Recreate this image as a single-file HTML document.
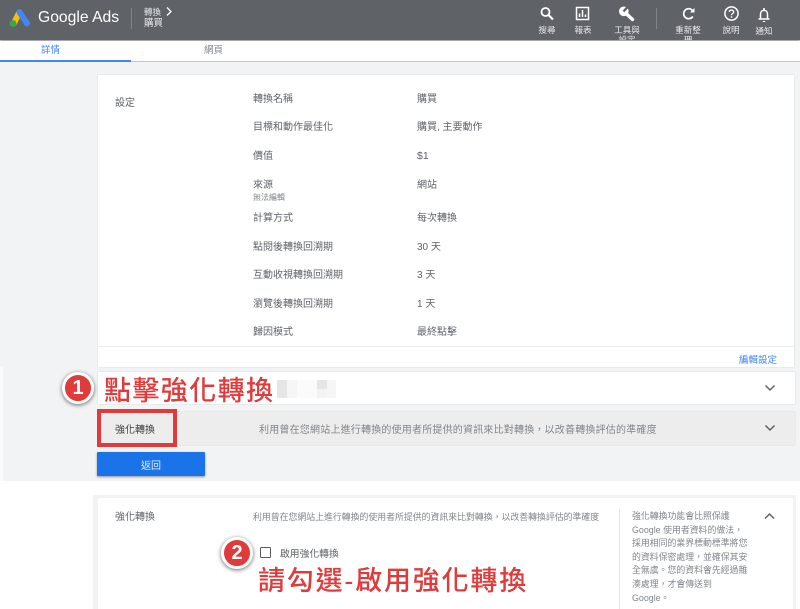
<!DOCTYPE html>
<html lang="zh-Hant">
<head>
<meta charset="utf-8">
<title>Google Ads</title>
<style>
html,body{margin:0;padding:0;background:#fff;overflow:hidden;width:800px;height:609px}
body{position:relative;font-family:"Liberation Sans","Noto Sans CJK TC",sans-serif;font-size:10px;color:#5f6368}
div,span,svg{position:absolute}
.t{white-space:nowrap;line-height:14px}
.w{color:#e8eaed;font-size:8.5px;line-height:11px;text-align:center;white-space:nowrap}
.big{color:#e03a3a;font-size:27px;font-weight:500;line-height:32px;white-space:nowrap;letter-spacing:1.4px}
.c{width:26px;height:26px;border-radius:50%;background:#e03a3a;border:3px solid #fff;box-shadow:0 1px 4px rgba(0,0,0,.6);color:#fff;font-weight:bold;font-size:20px;line-height:26px;text-align:center}
</style>
</head>
<body>
<div style="left:0;top:0;width:800px;height:481px;background:#f1f3f4"></div>

<!-- header -->
<div style="left:0;top:0;width:800px;height:40px;background:#5f6368;box-shadow:0 1px 2px rgba(0,0,0,.45)"></div>
<svg style="left:9px;top:8px" width="22" height="20" viewBox="0 0 22 20">
<path d="M5 15 L10 5" stroke="#fbbc04" stroke-width="6" stroke-linecap="round" fill="none"/>
<path d="M10.500 4 L18 15.500" stroke="#4285f4" stroke-width="6" stroke-linecap="round" fill="none"/>
<circle cx="4" cy="15.500" r="3.400" fill="#34a853"/>
</svg>
<div class="t" style="left:38px;top:8px;font-size:15.700px;line-height:20px;color:#fff">Google Ads</div>
<div style="left:131px;top:8px;width:1px;height:21px;background:#80868b"></div>
<div class="t" style="left:144px;top:7px;color:#e8eaed;font-size:8.500px;line-height:11px">轉換</div>
<svg style="left:165px;top:6px" width="8" height="11" viewBox="0 0 8 11"><path d="M2 1.500 L6 5.500 L2 9.500" stroke="#fff" stroke-width="1.300" fill="none"/></svg>
<div class="t" style="left:144px;top:18px;color:#e8eaed;font-size:9.500px;line-height:11px">購買</div>

<svg style="left:539px;top:6px" width="16" height="15" viewBox="0 0 16 15"><circle cx="6.500" cy="6" r="4" stroke="#fff" stroke-width="1.800" fill="none"/><path d="M9.500 9 L14 13.500" stroke="#fff" stroke-width="2.200"/></svg>
<svg style="left:575px;top:6px" width="15" height="15" viewBox="0 0 15 15"><rect x="1.500" y="1.500" width="12" height="12" stroke="#fff" stroke-width="1.500" fill="none"/><path d="M4.500 11V7.500M7.500 11V4M10.500 11V8.500" stroke="#fff" stroke-width="1.500"/></svg>
<svg style="left:618px;top:6px" width="17" height="16" viewBox="0 0 17 16"><circle cx="5.800" cy="5.300" r="4.800" fill="#fff"/><path d="M6 5.500 L14.500 13.500" stroke="#fff" stroke-width="3.400" stroke-linecap="round"/><path d="M5.500 5.500 L9.500 1" stroke="#5f6368" stroke-width="2.400"/></svg>
<div style="left:656px;top:8px;width:1px;height:21px;background:#80868b"></div>
<svg style="left:681px;top:6px" width="15" height="15" viewBox="0 0 15 15"><path d="M11.800 10.500 A5 5 0 1 1 11.500 4.500" stroke="#fff" stroke-width="1.700" fill="none"/><path d="M13.500 2 V6.500 H9 Z" fill="#fff"/></svg>
<svg style="left:724px;top:6px" width="15" height="15" viewBox="0 0 15 15"><circle cx="7.500" cy="7.500" r="6.600" stroke="#fff" stroke-width="1.500" fill="none"/><path d="M5.300 6 C5.300 3.400 9.700 3.400 9.700 6 C9.700 7.500 7.500 7.500 7.500 9.300" stroke="#fff" stroke-width="1.300" fill="none"/><rect x="6.800" y="10.300" width="1.400" height="1.400" fill="#fff"/></svg>
<svg style="left:757px;top:7px" width="14" height="16" viewBox="0 0 14 16"><path d="M3.500 11.500 V7 C3.500 2.200 10.500 2.200 10.500 7 V11.500" stroke="#fff" stroke-width="1.500" fill="none"/><path d="M1.500 12 H12.500" stroke="#fff" stroke-width="1.500"/><path d="M5.800 14 H8.200 V15 H5.800 Z M6.200 1 H7.800 V3 H6.200 Z" fill="#fff"/></svg>

<div class="w" style="left:537px;top:25px;width:20px">搜尋</div>
<div class="w" style="left:573px;top:25px;width:20px">報表</div>
<div class="w" style="left:612px;top:25px;width:30px">工具與</div>
<div class="w" style="left:612px;top:35px;width:30px;height:5px;overflow:hidden">設定</div>
<div class="w" style="left:673px;top:25px;width:30px">重新整</div>
<div class="w" style="left:678px;top:35px;width:20px;height:5px;overflow:hidden">理</div>
<div class="w" style="left:721px;top:25px;width:20px">說明</div>
<div class="w" style="left:754px;top:26px;width:20px">通知</div>

<!-- tabs -->
<div style="left:0;top:41px;width:800px;height:20px;background:#fff;border-bottom:1px solid #c4c6c8"></div>
<div style="left:0;top:60px;width:131px;height:2px;background:#4285f4"></div>
<div class="t" style="left:41px;top:44px;color:#4285f4;font-size:9.500px">詳情</div>
<div class="t" style="left:204px;top:44px;font-size:9.500px;color:#80868b">網頁</div>

<!-- settings card -->
<div style="left:98px;top:75px;width:696px;height:292px;background:#fff;box-shadow:0 0 1px rgba(0,0,0,.18)"></div>
<div style="left:98px;top:346px;width:696px;height:1px;background:#eceef0"></div>
<div class="t" style="left:115px;top:97px">設定</div>

<div class="t" style="left:253px;top:93px">轉換名稱</div>
<div class="t" style="left:417px;top:93px">購買</div>
<div class="t" style="left:253px;top:121px">目標和動作最佳化</div>
<div class="t" style="left:417px;top:121px">購買, 主要動作</div>
<div class="t" style="left:253px;top:150px">價值</div>
<div class="t" style="left:417px;top:149px;font-size:10.500px">$1</div>
<div class="t" style="left:253px;top:179px">來源</div>
<div class="t" style="left:253px;top:191px;font-size:8px;color:#80868b">無法編輯</div>
<div class="t" style="left:417px;top:179px">網站</div>
<div class="t" style="left:253px;top:212px">計算方式</div>
<div class="t" style="left:417px;top:212px">每次轉換</div>
<div class="t" style="left:253px;top:241px">點閱後轉換回溯期</div>
<div class="t" style="left:417px;top:241px">30 天</div>
<div class="t" style="left:253px;top:269px">互動收視轉換回溯期</div>
<div class="t" style="left:417px;top:269px">3 天</div>
<div class="t" style="left:253px;top:298px">瀏覽後轉換回溯期</div>
<div class="t" style="left:417px;top:298px">1 天</div>
<div class="t" style="left:253px;top:326px">歸因模式</div>
<div class="t" style="left:417px;top:326px">最終點擊</div>
<div class="t" style="left:739px;top:354px;color:#4285f4;font-size:9.500px">編輯設定</div>

<!-- row white -->
<div style="left:0;top:367px;width:3px;height:114px;background:#fff;opacity:.6"></div>
<div style="left:98px;top:372px;width:697px;height:32px;background:#fff;box-shadow:0 0 1px rgba(0,0,0,.2)"></div>
<div style="left:277px;top:380px;width:10px;height:18px;background:#e6e6e6"></div>
<div style="left:287px;top:380px;width:10px;height:18px;background:#f6f6f6"></div>
<div style="left:297px;top:380px;width:20px;height:18px;background:#fbfbfb"></div>
<div style="left:317px;top:380px;width:10px;height:9px;background:#e6e6e6"></div>
<div style="left:317px;top:389px;width:10px;height:9px;background:#f3f3f3"></div>
<div style="left:327px;top:380px;width:9px;height:18px;background:#f6f6f6"></div>
<svg style="left:764px;top:384px" width="12" height="8" viewBox="0 0 12 8"><path d="M1.500 1.500 L6 6 L10.500 1.500" stroke="#5f6368" stroke-width="1.500" fill="none"/></svg>

<!-- row grey -->
<div style="left:98px;top:412px;width:697px;height:33px;background:#ededed;box-shadow:0 0 1px rgba(0,0,0,.2)"></div>
<div class="t" style="left:115px;top:424px;color:#3c4043">強化轉換</div>
<div class="t" style="left:259px;top:424px;color:#80868b;letter-spacing:.2px">利用曾在您網站上進行轉換的使用者所提供的資訊來比對轉換，以改善轉換評估的準確度</div>
<svg style="left:764px;top:424px" width="12" height="8" viewBox="0 0 12 8"><path d="M1.500 1.500 L6 6 L10.500 1.500" stroke="#5f6368" stroke-width="1.500" fill="none"/></svg>
<div style="left:97px;top:409px;width:72px;height:30px;border:4px solid #e03a3a"></div>

<div style="left:97px;top:452px;width:108px;height:24px;background:#1a73e8;border-radius:1px;box-shadow:0 1px 2px rgba(0,0,0,.4)"></div>
<div class="t" style="left:141px;top:460px;color:#e8f0fe">返回</div>

<div class="c" style="left:62px;top:372px">1</div>
<div class="big" style="left:104px;top:375px">點擊強化轉換</div>

<!-- second panel -->
<div style="left:93px;top:495px;width:703px;height:114px;background:#f1f3f4"></div>
<div style="left:98px;top:498px;width:695px;height:111px;background:#fff"></div>
<div class="t" style="left:115px;top:511px">強化轉換</div>
<div class="t" style="left:253px;top:510px;font-size:8.900px;color:#80868b">利用曾在您網站上進行轉換的使用者所提供的資訊來比對轉換，以改善轉換評估的準確度</div>
<div style="left:619px;top:509px;width:1px;height:100px;background:#e3e5e7"></div>
<div style="left:632px;top:510px;width:118px;font-size:8.900px;line-height:13.600px;color:#80868b;white-space:nowrap">強化轉換功能會比照保護<br>Google 使用者資料的做法，<br>採用相同的業界標動標準將您<br>的資料保密處理，並確保其安<br>全無虞。您的資料會先經過雜<br>湊處理，才會傳送到<br>Google。</div>
<svg style="left:763px;top:512px" width="13" height="8" viewBox="0 0 13 8"><path d="M2 6.500 L6.500 2 L11 6.500" stroke="#5f6368" stroke-width="1.500" fill="none"/></svg>
<div style="left:260px;top:547px;width:9px;height:9px;border:1.500px solid #5a5a5a;border-radius:1.500px"></div>
<div class="t" style="left:280px;top:548px;font-size:9.800px">啟用強化轉換</div>

<div class="c" style="left:221px;top:537px">2</div>
<div class="big" style="left:258px;top:565px;letter-spacing:1.800px;font-size:27px">請勾選-啟用強化轉換</div>
</body>
</html>
